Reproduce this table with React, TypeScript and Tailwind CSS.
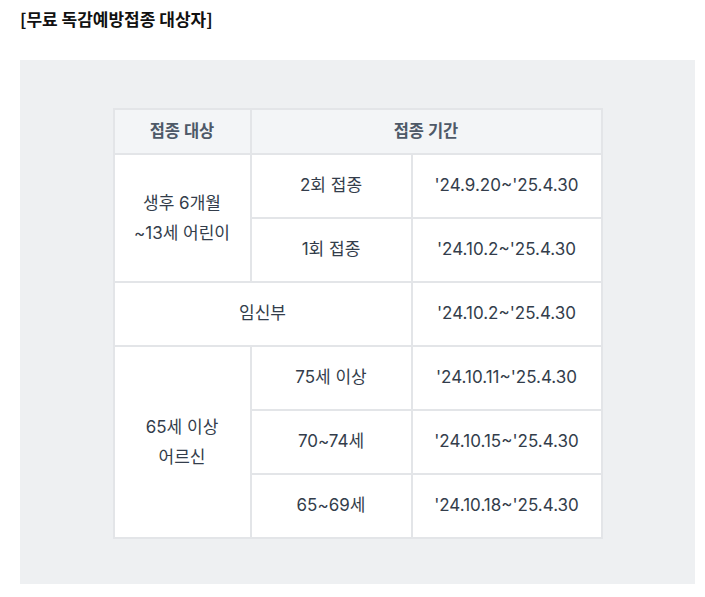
const font = { fontFamily: 'Inter, "Noto Sans CJK KR", "Noto Sans", sans-serif' };

const cell = 'border-2 border-[#e3e5e8] text-center align-middle text-[17px] text-[#333d4b]';

export default function App() {
  return (
    <div className="w-[705px] h-[597px] bg-white" style={font}>
      <div className="pl-5 pr-[10px] pt-[7px]">
        <h2
          className="text-[17px] font-bold text-[#111] leading-[24px]"
          style={{ fontFamily: '"Noto Sans CJK KR", sans-serif' }}
        >
          [무료 독감예방접종 대상자]
        </h2>
        <div className="mt-[29px] bg-[#eef0f2] h-[524px] flex justify-center pt-[48px]">
          <table className="border-collapse bg-white h-fit">
            <colgroup>
              <col className="w-[137px]" />
              <col className="w-[161px]" />
              <col className="w-[190px]" />
            </colgroup>
            <thead>
              <tr className="h-[45px] bg-[#f3f5f7]">
                <th className="border-2 border-[#e3e5e8] text-[16.5px] font-bold text-[#4e5968]">접종 대상</th>
                <th colSpan={2} className="border-2 border-[#e3e5e8] text-[16.5px] font-bold text-[#4e5968]">
                  접종 기간
                </th>
              </tr>
            </thead>
            <tbody>
              <tr className="h-[64px]">
                <td rowSpan={2} className={`${cell} leading-[30px]`}>
                  생후 6개월
                  <br />
                  ~13세 어린이
                </td>
                <td className={cell}>2회 접종</td>
                <td className={cell}>'24.9.20~'25.4.30</td>
              </tr>
              <tr className="h-[64px]">
                <td className={cell}>1회 접종</td>
                <td className={cell}>'24.10.2~'25.4.30</td>
              </tr>
              <tr className="h-[64px]">
                <td colSpan={2} className={cell}>임신부</td>
                <td className={cell}>'24.10.2~'25.4.30</td>
              </tr>
              <tr className="h-[64px]">
                <td rowSpan={3} className={`${cell} leading-[30px]`}>
                  65세 이상
                  <br />
                  어르신
                </td>
                <td className={cell}>75세 이상</td>
                <td className={cell}>'24.10.11~'25.4.30</td>
              </tr>
              <tr className="h-[64px]">
                <td className={cell}>70~74세</td>
                <td className={cell}>'24.10.15~'25.4.30</td>
              </tr>
              <tr className="h-[64px]">
                <td className={cell}>65~69세</td>
                <td className={cell}>'24.10.18~'25.4.30</td>
              </tr>
            </tbody>
          </table>
        </div>
      </div>
    </div>
  );
}
